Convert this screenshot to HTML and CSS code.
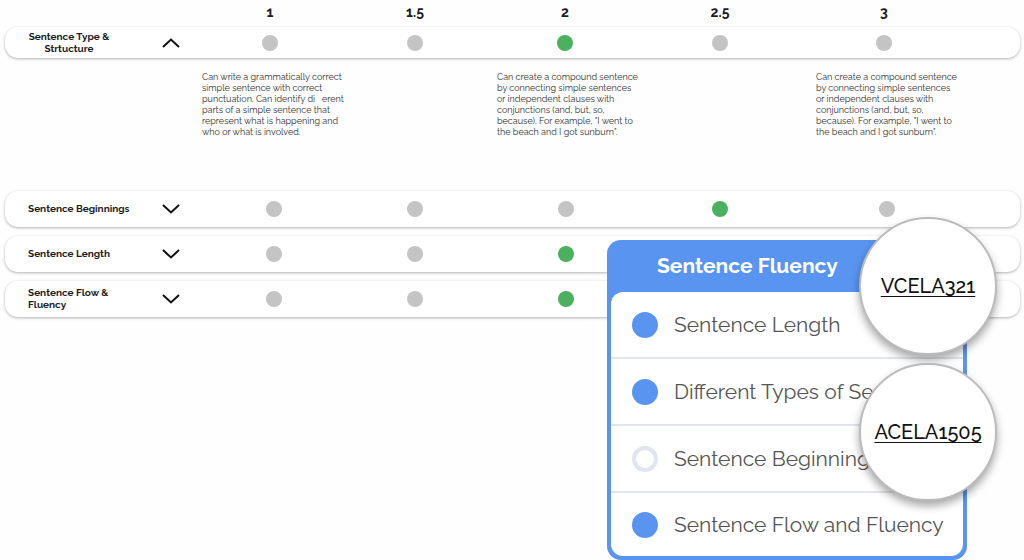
FILE: index.html
```html
<!doctype html>
<html lang="en">
  <head>
    <meta charset="UTF-8" />
    <meta name="viewport" content="width=device-width, initial-scale=1" />
    <title>Sentence Fluency</title>
    <link rel="stylesheet" href="styles.css">
  </head>
  <body>
    <main class="rubric">
      <div class="score-grid score-header">
        <span class="score">1</span>
        <span class="score">1.5</span>
        <span class="score">2</span>
        <span class="score">2.5</span>
        <span class="score">3</span>
      </div>

      <div class="score-grid criteria criteria-open" role="radiogroup" aria-labelledby="type">
        <div class="criteria-title">
          <span class="criteria-name centered" id="type">Sentence Type &amp;<br>Strtucture</span>
          <button type="button" class="toggle" aria-label="Collapse" aria-expanded="true">
            <svg width="18" height="10" viewBox="0 0 18 10"><path d="M1 9 9 1.5 17 9" /></svg>
          </button>
        </div>
        <input type="radio" class="dot" name="type" aria-label="1">
        <input type="radio" class="dot" name="type" aria-label="1.5">
        <input type="radio" class="dot" name="type" aria-label="2" checked>
        <input type="radio" class="dot" name="type" aria-label="2.5">
        <input type="radio" class="dot" name="type" aria-label="3">
      </div>

      <div class="score-grid descriptions">
        <p class="description level-1">Can write a grammatically correct<br>simple sentence with correct<br>punctuation. Can identify di&nbsp;&nbsp; erent<br>parts of a simple sentence that<br>represent what is happening and<br>who or what is involved.</p>
        <p class="description level-2">Can create a compound sentence<br>by connecting simple sentences<br>or independent clauses with<br>conjunctions (and, but, so,<br>because). For example, "I went to<br>the beach and I got sunburn".</p>
        <p class="description level-3">Can create a compound sentence<br>by connecting simple sentences<br>or independent clauses with<br>conjunctions (and, but, so,<br>because). For example, "I went to<br>the beach and I got sunburn".</p>
      </div>

      <div class="criteria-list">
        <div class="score-grid criteria" role="radiogroup" aria-labelledby="beginnings">
          <div class="criteria-title">
            <span class="criteria-name" id="beginnings">Sentence Beginnings</span>
            <button type="button" class="toggle" aria-label="Expand" aria-expanded="false">
              <svg width="18" height="10" viewBox="0 0 18 10"><path d="M1 1 9 8.500 17 1" /></svg>
            </button>
          </div>
          <input type="radio" class="dot" name="beginnings" aria-label="1">
          <input type="radio" class="dot" name="beginnings" aria-label="1.5">
          <input type="radio" class="dot" name="beginnings" aria-label="2">
          <input type="radio" class="dot" name="beginnings" aria-label="2.5" checked>
          <input type="radio" class="dot" name="beginnings" aria-label="3">
        </div>

        <div class="score-grid criteria" role="radiogroup" aria-labelledby="length">
          <div class="criteria-title">
            <span class="criteria-name" id="length">Sentence Length</span>
            <button type="button" class="toggle" aria-label="Expand" aria-expanded="false">
              <svg width="18" height="10" viewBox="0 0 18 10"><path d="M1 1 9 8.500 17 1" /></svg>
            </button>
          </div>
          <input type="radio" class="dot" name="length" aria-label="1">
          <input type="radio" class="dot" name="length" aria-label="1.5">
          <input type="radio" class="dot" name="length" aria-label="2" checked>
        </div>

        <div class="score-grid criteria" role="radiogroup" aria-labelledby="flow">
          <div class="criteria-title">
            <span class="criteria-name" id="flow">Sentence Flow &amp;<br>Fluency</span>
            <button type="button" class="toggle" aria-label="Expand" aria-expanded="false">
              <svg width="18" height="10" viewBox="0 0 18 10"><path d="M1 1 9 8.500 17 1" /></svg>
            </button>
          </div>
          <input type="radio" class="dot" name="flow" aria-label="1">
          <input type="radio" class="dot" name="flow" aria-label="1.5">
          <input type="radio" class="dot" name="flow" aria-label="2" checked>
        </div>
      </div>

      <!-- Checklist popup -->
      <section class="card">
        <h2 class="card-title">Sentence Fluency</h2>
        <ul class="checklist">
          <li class="check-item">
            <input type="checkbox" class="check" id="check1" checked>
            <label for="check1">Sentence Length</label>
          </li>
          <li class="check-item">
            <input type="checkbox" class="check" id="check2" checked>
            <label for="check2">Different Types of Sentences</label>
          </li>
          <li class="check-item">
            <input type="checkbox" class="check" id="check3">
            <label for="check3">Sentence Beginnings</label>
          </li>
          <li class="check-item">
            <input type="checkbox" class="check" id="check4" checked>
            <label for="check4">Sentence Flow and Fluency</label>
          </li>
        </ul>
      </section>

      <!-- Curriculum codes -->
      <div class="codes">
        <a class="code" href="#">VCELA321</a>
        <a class="code" href="#">ACELA1505</a>
      </div>
    </main>
  </body>
</html>
```
FILE: styles.css
```css
* {
  box-sizing: border-box;
}

body {
  margin: 0;
  background: #fefefe;
  color: #1d1d1f;
  font-family: Raleway, Lato, sans-serif;
  font-variant-numeric: oldstyle-nums;
}

.rubric {
  position: relative;
  min-height: 100vh;
  padding: 0 4px 0 5px;
}

.score-grid {
  display: grid;
  grid-template-columns: 193fr 144fr 146fr 154fr 156fr 172fr 50fr;
  align-items: center;
  justify-items: center;
}

.score-header {
  height: 27px;
  font-size: 14px;
  font-weight: 700;
  line-height: 24px;
  align-items: start;
}

.score:first-child {
  grid-column: 2;
}

.criteria {
  height: 36px;
  background: white;
  border-radius: 13px;
  box-shadow: 0 1px 3px rgba(0, 0, 0, 0.3);
}

.criteria-open {
  height: 31px;
}

.criteria-title {
  display: flex;
  align-items: center;
  justify-self: stretch;
  padding-left: 23px;
}

.criteria-name {
  width: 134px;
  font-size: 10px;
  font-weight: 700;
  line-height: 12px;
}

.criteria-name.centered {
  width: 82px;
  margin-right: 52px;
  text-align: center;
  white-space: nowrap;
}

.toggle {
  display: flex;
  padding: 0;
  border: none;
  background: none;
  cursor: pointer;
}

.toggle path {
  fill: none;
  stroke: #111;
  stroke-width: 2;
}

.dot {
  appearance: none;
  width: 16px;
  height: 16px;
  margin: 0;
  border-radius: 50%;
  background: #c4c4c4;
  cursor: pointer;
}

.dot:checked {
  background: #4bb15f;
}

.descriptions {
  height: 133px;
  padding-top: 14px;
  align-items: start;
}

.description {
  width: 136px;
  margin: 0;
  color: #333;
  font-size: 9px;
  line-height: 11px;
  white-space: nowrap;
}

.level-1 {
  grid-column: 2;
}

.level-2 {
  grid-column: 4;
}

.level-3 {
  grid-column: 6;
}

.criteria-list {
  display: flex;
  flex-direction: column;
  gap: 9px;
}

.criteria-list .score-grid {
  grid-template-columns: 201fr 136fr 146fr 156fr 152fr 182fr 42fr;
}

.card {
  position: absolute;
  top: 240px;
  right: 57px;
  width: 360px;
  padding: 0 4px 4px;
  background: #5994f0;
  border-radius: 14px;
}

.card-title {
  margin: 0;
  padding: 0 46px;
  color: white;
  font-size: 21px;
  font-weight: 700;
  line-height: 52px;
}

.checklist {
  margin: 0;
  padding: 0;
  list-style: none;
  overflow: hidden;
  background: white;
  border-radius: 12px;
}

.check-item {
  display: flex;
  align-items: center;
  gap: 16px;
  height: 67px;
  padding-left: 21px;
  border-bottom: 2px solid #e1e5ed;
  color: #555;
  font-size: 21px;
  white-space: nowrap;
}

.check-item:last-child {
  height: 63px;
  border-bottom: none;
}

.check {
  appearance: none;
  flex-shrink: 0;
  width: 26px;
  height: 26px;
  margin: 0;
  border: 4px solid #e1e5ed;
  border-radius: 50%;
  cursor: pointer;
}

.check:checked {
  border-color: #5994f0;
  background: #5994f0;
}

.codes {
  position: absolute;
  top: 217px;
  right: 27px;
  display: flex;
  flex-direction: column;
  gap: 8px;
}

.code {
  display: flex;
  align-items: center;
  justify-content: center;
  width: 138px;
  height: 138px;
  background: white;
  border: 2px solid #bbb;
  border-radius: 50%;
  box-shadow: 0 5px 8px rgba(0, 0, 0, 0.35);
  color: #111;
  font-size: 20px;
  font-weight: 500;
  text-decoration: underline;
  text-decoration-thickness: 1px;
  text-underline-offset: 3px;
}
```
